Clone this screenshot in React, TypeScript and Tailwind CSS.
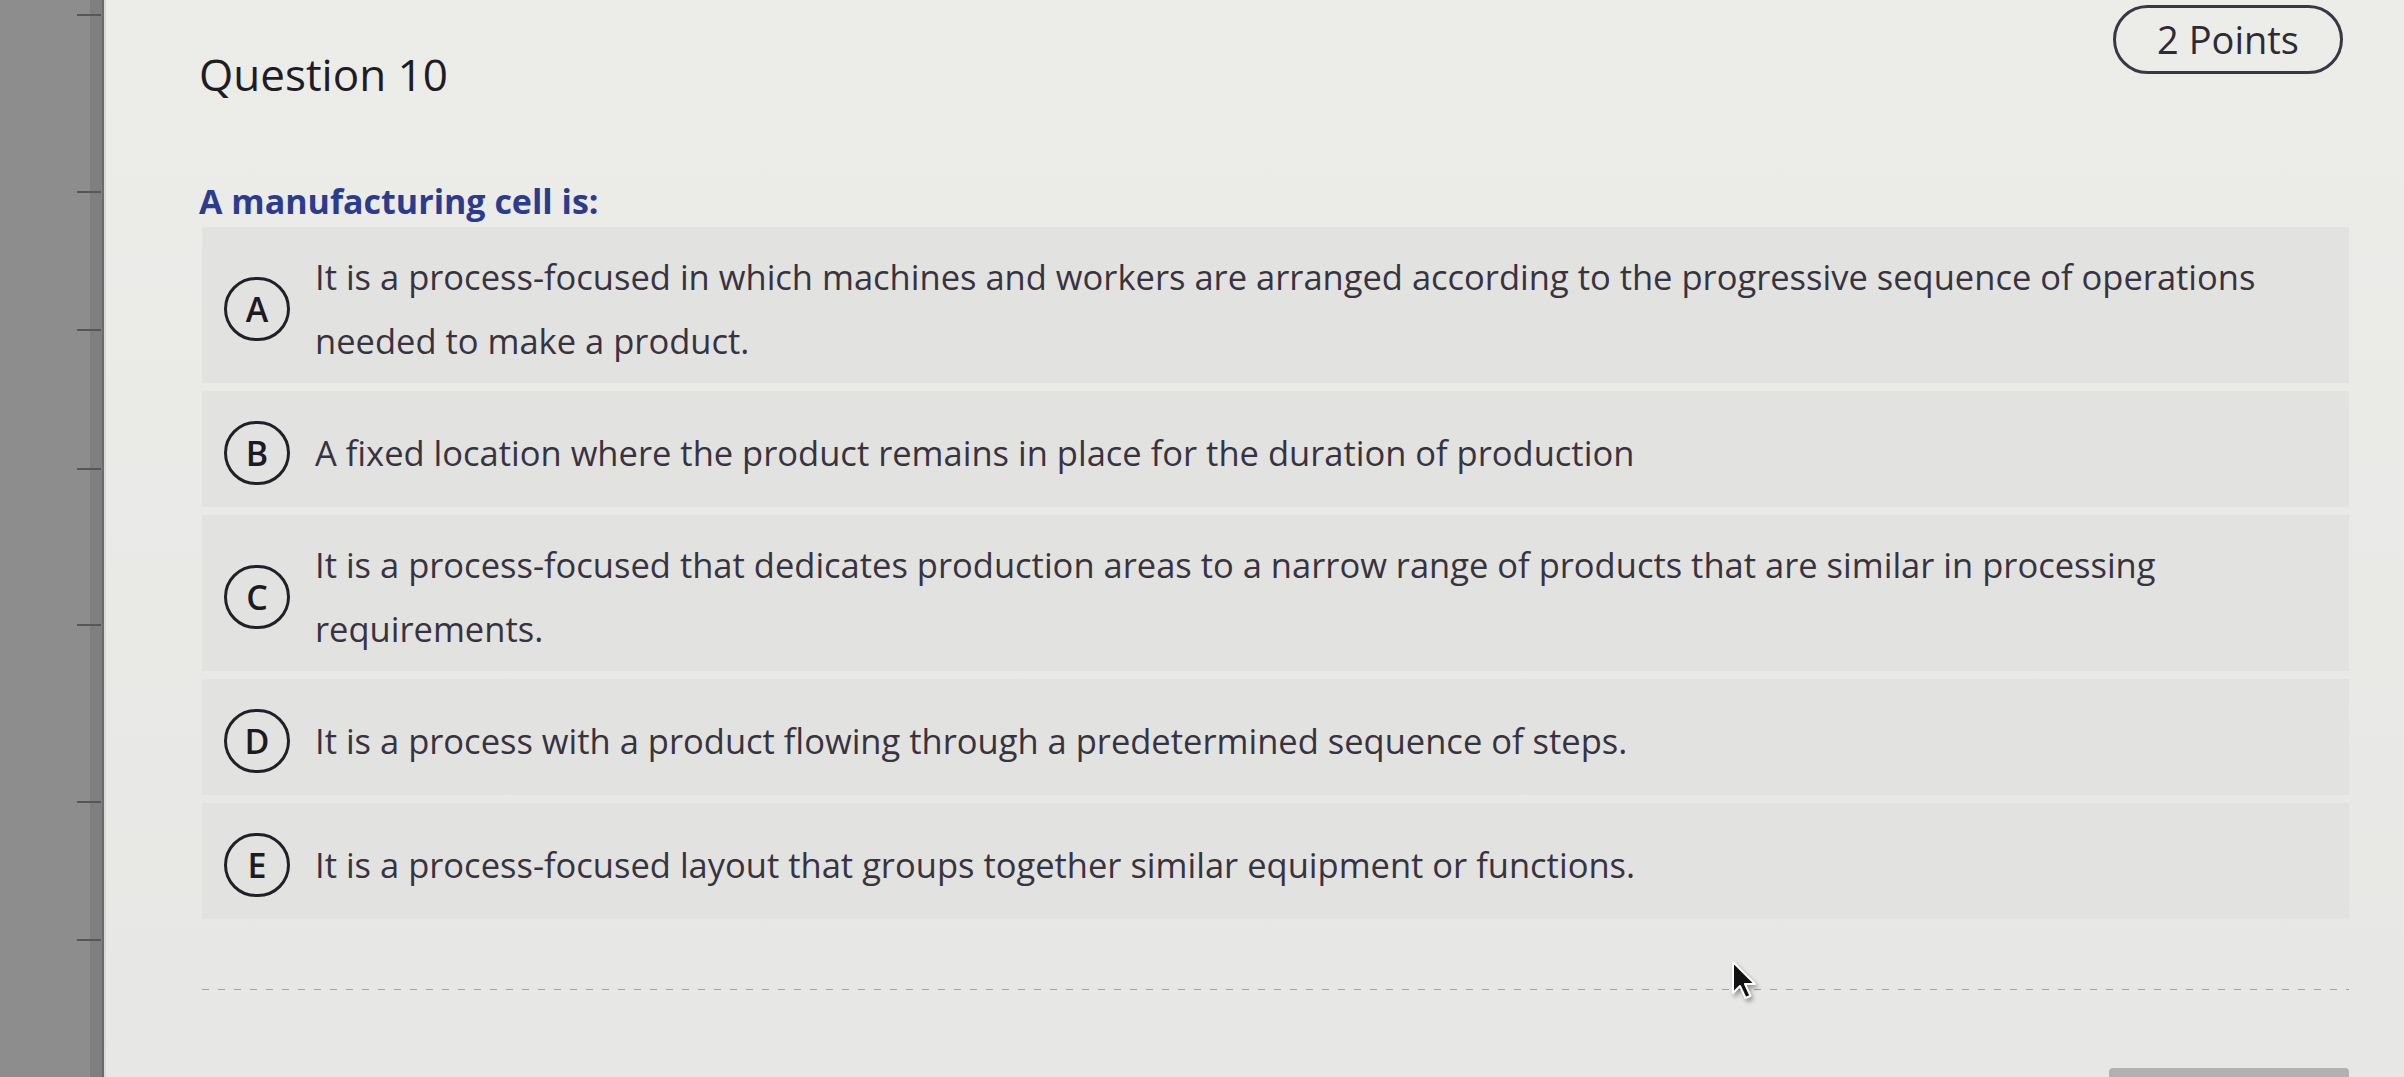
import type { ReactNode } from "react";

// ruler ticks down the grey strip on the left edge of the photo
const ticks = ["mt-[14px]", "mt-[175px]", "mt-[136px]", "mt-[137px]", "mt-[154px]", "mt-[175px]", "mt-[136px]"];

const options = [
  {
    letter: "A",
    text: "It is a process-focused in which machines and workers are arranged according to the progressive sequence of operations needed to make a product.",
  },
  { letter: "B", text: "A fixed location where the product remains in place for the duration of production" },
  {
    letter: "C",
    text: "It is a process-focused that dedicates production areas to a narrow range of products that are similar in processing requirements.",
  },
  { letter: "D", text: "It is a process with a product flowing through a predetermined sequence of steps." },
  { letter: "E", text: "It is a process-focused layout that groups together similar equipment or functions." },
];

function Ruler() {
  return (
    <div className="flex w-[106px] shrink-0 flex-col items-end bg-[linear-gradient(90deg,#8d8d8d_0_90px,#7f7f80_90px_102px,#6c6c6e_102px_104px,#d9d9d7_104px)] pr-[5px]">
      {ticks.map((t, i) => (
        <div key={i} className={`${t} h-[2px] w-[24px] bg-[#56565b]`} />
      ))}
    </div>
  );
}

function Option({ letter, children }: { letter: string; children: ReactNode }) {
  return (
    <div className="flex min-h-[116px] items-center gap-[25px] bg-[#e2e2e0] pb-[10px] pl-[22px] pr-[40px] pt-[18px]">
      <span className="flex h-[64px] w-[66px] shrink-0 items-center justify-center rounded-full border-[3px] border-[#231f29] text-[34px] font-semibold leading-none text-[#1d1a22]">
        {letter}
      </span>
      <p className="text-[34.5px] leading-[64px] text-[#38333f]">{children}</p>
    </div>
  );
}

function Cursor() {
  return (
    <svg
      className="absolute left-[1731px] top-[960px] drop-shadow-[2px_3px_2px_rgba(0,0,0,0.35)]"
      width="26"
      height="42"
      viewBox="0 0 26 42"
    >
      <path d="M2 2 L2 33 L9 26 L14.5 38 L19.5 35.8 L14 24 L24 24 Z" fill="#111" stroke="#fff" strokeWidth="2" strokeLinejoin="round" />
    </svg>
  );
}

export default function App() {
  return (
    <div className="relative flex h-[1077px] w-[2404px] overflow-hidden bg-[linear-gradient(180deg,#ecece9,#e7e7e5)] font-['Open_Sans',sans-serif]">
      <Ruler />
      <main className="flex flex-1 flex-col pl-[93px] pr-[55px]">
        <div className="flex items-start justify-between">
          <h1 className="mt-[48px] text-[44px] leading-[52px] text-[#1f1c24]">Question 10</h1>
          <div className="mr-[6px] mt-[5px] flex h-[69px] w-[230px] items-center justify-center rounded-full border-[3px] border-[#3a3744] text-[38px] text-[#2e2b36]">
            2 Points
          </div>
        </div>

        <h2 className="mt-[79px] text-[34px] font-bold leading-[44px] text-[#2b3c8e]">A manufacturing cell is:</h2>

        <div className="ml-[3px] mt-[4px] flex flex-col gap-[8px]">
          {options.map((o) => (
            <Option key={o.letter} letter={o.letter}>
              {o.text}
            </Option>
          ))}
        </div>

        <div className="ml-[3px] mt-[70px] h-[3px] bg-[repeating-linear-gradient(90deg,#a2a2a2_0_7px,transparent_7px_16px)]" />

        <div className="mt-[78px] h-[20px] w-[240px] self-end rounded-t-[4px] bg-[#b1b1b1]" />
      </main>
      <Cursor />
    </div>
  );
}
